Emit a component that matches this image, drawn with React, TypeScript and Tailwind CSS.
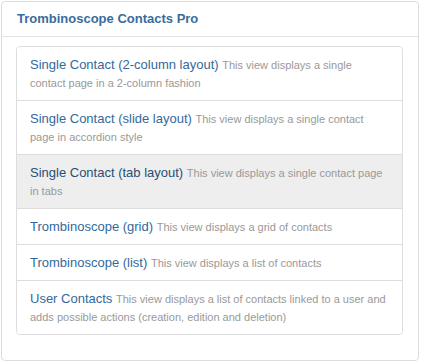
import React from "react";

const items = [
  { t: "Single Contact (2-column layout)", d: "This view displays a single contact page in a 2-column fashion" },
  { t: "Single Contact (slide layout)", d: "This view displays a single contact page in accordion style" },
  { t: "Single Contact (tab layout)", d: "This view displays a single contact page in tabs", active: true },
  { t: "Trombinoscope (grid)", d: "This view displays a grid of contacts" },
  { t: "Trombinoscope (list)", d: "This view displays a list of contacts" },
  { t: "User Contacts", d: "This view displays a list of contacts linked to a user and adds possible actions (creation, edition and deletion)" },
];

export default function App() {
  return (
    <div className="bg-white w-[421px] h-[362px] pt-[1px] pl-[1px]" style={{ fontFamily: '"Liberation Sans", Arial, sans-serif' }}>
      <div className="w-[418px] border border-[#dddddd] rounded-[4px] bg-white">
        <div className="px-[15px] py-[8px] text-[13px] leading-[18px] font-bold text-[#3a6c9b] border-b border-[#e3e3e3]">
          Trombinoscope Contacts Pro
        </div>
        <div className="pt-[9px] pl-[14px] pr-[15px] pb-[25px]">
          <div className="border border-[#dddddd] rounded-[4px] overflow-hidden">
            {items.map((it, i) => (
              <div
                key={i}
                className={
                  "pl-[13px] pr-[12px] pt-[9px] pb-[8px] text-[13px] leading-[18px] " +
                  (i > 0 ? "border-t border-[#dddddd] " : "") +
                  (it.active ? "bg-[#eeeeee] text-[#2a4f72]" : "bg-white text-[#33699c]")
                }
              >
                <span>{it.t}</span>{" "}
                <span className="text-[11px] leading-[16px] text-[#999999]">{it.d}</span>
              </div>
            ))}
          </div>
        </div>
      </div>
    </div>
  );
}
